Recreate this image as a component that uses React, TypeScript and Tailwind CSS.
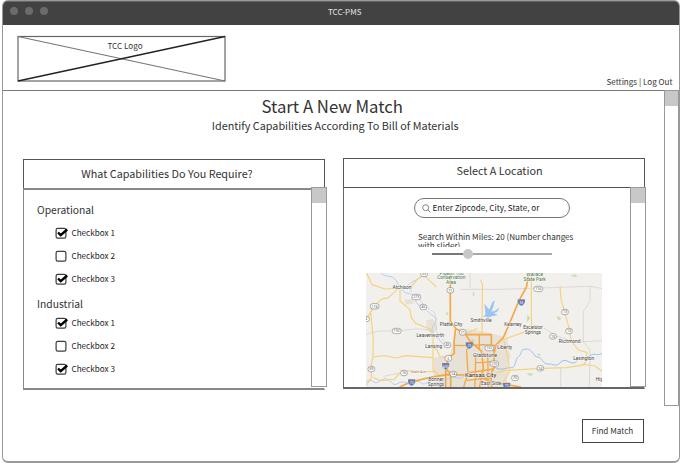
import React from "react";

function Checkbox({ label, checked }: { label: string; checked: boolean }) {
  return (
    <label className="flex h-[23.3px] items-center">
      <svg className="h-[14px] w-[15px] shrink-0" viewBox="0 0 15 14">
        <rect x="2.1" y="2.3" width="9.8" height="9.8" rx="1.7" fill="white" stroke="#3c3c3c" strokeWidth="1.2" />
        {checked && <path d="M4 6.5 6.7 9.1 13.2 3.5" fill="none" stroke="#000" strokeWidth="2.4" />}
      </svg>
      <span className="ml-[2.5px] text-[8.15px] leading-[12px] whitespace-nowrap text-[#222]">{label}</span>
    </label>
  );
}

function Group({ title, className, listClassName }: { title: string; className: string; listClassName: string }) {
  return (
    <section className={className}>
      <h3 className="h-[16px] text-[10.3px] leading-[16px] text-[#333]">{title}</h3>
      <div className={`ml-[17px] ${listClassName}`}>
        <Checkbox label="Checkbox 1" checked />
        <Checkbox label="Checkbox 2" checked={false} />
        <Checkbox label="Checkbox 3" checked />
      </div>
    </section>
  );
}

function Scrollbar({ className }: { className: string }) {
  return (
    <div className={`shrink-0 border border-[#999] bg-white ${className}`}>
      <div className="h-[15px] bg-[#c8c8c8]" />
    </div>
  );
}

function Shield({ x, y, n }: { x: number; y: number; n: string }) {
  const w = n.length > 2 ? 13 : 10;
  return (
    <g>
      <rect x={x - w} y={y - 8} width={w * 2} height="16" rx="7" fill="#fff" stroke="#888" strokeWidth="2" />
      <text x={x} y={y + 4} fontSize="11" textAnchor="middle" fill="#555">{n}</text>
    </g>
  );
}

function Interstate({ x, y, n }: { x: number; y: number; n: string }) {
  return (
    <g>
      <path d={`M${x - 11} ${y - 9}H${x + 11}Q${x + 13} ${y + 6} ${x} ${y + 11}Q${x - 13} ${y + 6} ${x - 11} ${y - 9}Z`} fill="#4f7fc4" stroke="#eee" />
      <path d={`M${x - 10} ${y - 8}h20v4h-20z`} fill="#b86572" />
      <text x={x} y={y + 5} fontSize="10" textAnchor="middle" fill="#fff">{n}</text>
    </g>
  );
}

function RegionMap() {
  return (
    <svg className="block h-[114px] w-[236px] font-['Roboto',sans-serif]" viewBox="18 15 708 342" preserveAspectRatio="none" fontSize="14.5" fill="#444">
      <rect x="18" y="15" width="711" height="342" fill="#f2f0ec" />
      <g fill="#e7e1d6">
        <path d="M222 270 270 258 282 215 298 180 368 190 428 205 446 235 440 357 220 357Z" />
        <path d="M198 157 218 152 232 175 222 198 202 188ZM130 96 158 92 162 106 140 110ZM440 200 452 270 430 300Z" />
      </g>
      <g fill="#c5ddb0">
        <path d="M338 70l7 10-6 5zM258 130l9 9-8 3zM502 140l9 10-10 13zM590 143l15 8-10 7zM631 25l14-7 7 9zM500 315l22 2-12 8zM532 255l11 5-8 4zM335 210l10 9-9 7z" />
      </g>
      <g fill="none" stroke="#cfcecb" strokeWidth="2">
        <path d="M18 200C55 184 80 190 110 189S175 175 220 190M300 64H420L690 55 729 62M330 15V60M552 180 590 205 650 222 729 218M690 55V100L670 130V222L690 245 688 357M602 300V357M70 325 120 315M170 80 190 110 225 135 230 190 260 230" />
      </g>
      <g fill="none" stroke="#b5cff5" strokeWidth="3" strokeLinecap="round">
        <path d="M62 15C80 32 96 17 109 39S128 76 149 77 160 105 180 113 202 134 222 145 212 169 216 190 233 204 240 218 261 226 270 235" />
        <path d="M172 34 155 42 145 52 154 70M18 342C35 323 40 354 58 340S85 333 97 346 118 333 140 345 166 330 182 344 206 331 226 337 239 347 262 333 291 338 310 326" />
        <path stroke="#9dbff3" d="M402 296C424 313 440 296 454 299S464 273 476 265 478 243 499 243 520 268 533 267 547 289 564 288 587 299 603 282 635 299 651 278 673 278 690 264 713 270 729 253" />
      </g>
      <path fill="#9dc3f3" stroke="#8ab6ef" d="m374 109 9 11 5 6 5-12 5-12 5-3-3 15-7 18 12-3 12-8-5 9-12 6 12 5-14 2-9 3-6 8-3-9-9 1 6-7-1-16z" />
      <g fill="none" stroke="#f6d27f" strokeWidth="3.6" strokeLinejoin="round">
        <path d="M20 15 36 50 75 63 120 60 153 57 172 34 204 15M18 156 42 115 63 94 85 89 116 61" />
        <path d="M120 60V99L150 125 154 149 167 166 210 183 219 205V306L238 322M40 115 32 133 40 216 39 265 32 302 35 329 18 352M39 267 73 263 109 270 137 263 219 269M40 329 62 338 102 334 120 315M122 308 228 312M184 15 205 34 229 57" />
        <path d="M264 269 240 267 231 245 220 240M304 205 352 181M360 35Q370 45 367 70L366 200M514 15 514 126 515 186 490 193 430 215M600 55 603 92 613 130 625 172 635 220 655 246 681 253 674 290 620 299 544 301 430 308 394 320M667 288 705 294 729 312M432 218 444 270 449 310 430 342" />
      </g>
      <g fill="none" stroke="#f5a742" strokeWidth="5" strokeLinejoin="round">
        <path d="M271 15V159L287 181 282 221 283 256 264 270 257 312 257 357M287 182 314 195 329 218 365 250 370 300 359 357M317 200H394V230L402 250M507 15 499 58 477 98 449 165 430 209 408 231 402 256 402 299 392 319 395 357M119 357 152 342 211 328 260 320 318 321 358 326 400 344 442 350 483 357M251 294 272 318 272 357" />
        <path strokeWidth="4" d="M327 230 320 247 322 285 324 315 311 357M283 232 329 233 369 230 405 232M345 262 371 257 402 267M349 284 370 283 403 280M347 265 345 357M383 257 385 357M320 315 402 303M320 337 402 328M358 200V245" />
      </g>
      <g textAnchor="middle" stroke="#f8f7f4" strokeWidth="3" paintOrder="stroke">
        <text x="126" y="63">Atchison</text>
        <g fill="#4b784d">
          <text x="275" y="20">Pigeon Too</text><text x="274" y="34">Conservation</text><text x="273" y="48">Area</text>
          <text x="524" y="24">Wallace</text><text x="524" y="38">State Park</text>
        </g>
        <text x="273" y="173" fontSize="15">Platte City</text>
        <text x="363" y="163">Smithville</text>
        <text x="211" y="206">Leavenworth</text>
        <text x="221" y="241">Lansing</text>
        <text x="375" y="267" fontSize="16">Gladstone</text>
        <text x="362" y="326" fontSize="18" fill="#222">Kansas City</text>
        <text x="393" y="350">East Side</text>
        <text x="228" y="340">Bonner</text><text x="228" y="355">Springs</text>
        <text x="175" y="315" fontSize="11" fill="#a87940">State Ave</text>
        <text x="459" y="175">Kearney</text>
        <text x="519" y="182">Excelsior</text><text x="519" y="197">Springs</text>
        <text x="629" y="224">Richmond</text>
        <text x="434" y="243">Liberty</text>
        <text x="671" y="277">Lexington</text>
        <text x="707" y="340" textAnchor="start">Hig</text>
      </g>
      <Shield x={192} y={18} n="59" /><Shield x={44} y={115} n="116" />
      <Shield x={169} y={87} n="273" /><Shield x={190} y={117} n="45" />
      <Shield x={271} y={67} n="71" /><Shield x={110} y={189} n="192" />
      <Shield x={18} y={153} n="4" /><Shield x={308} y={193} n="71" />
      <Shield x={262} y={231} n="45" /><Shield x={265} y={271} n="5" />
      <Shield x={34} y={303} n="59" /><Shield x={132} y={315} n="16" />
      <Shield x={280} y={318} n="24" /><Shield x={388} y={240} n="152" />
      <Shield x={403} y={287} n="210" /><Shield x={535} y={63} n="116" />
      <Shield x={615} y={132} n="13" /><Shield x={627} y={189} n="13" />
      <Shield x={579} y={205} n="10" /><Shield x={541} y={301} n="24" />
      <Shield x={465} y={330} n="70" />
      <Interstate x={328} y={232} n="29" /><Interstate x={257} y={294} n="435" />
      <Interstate x={155} y={343} n="70" /><Interstate x={484} y={103} n="35" />
      <Interstate x={440} y={353} n="70" />
    </svg>
  );
}

export default function App() {
  return (
    <div className="h-[463px] w-[680px] overflow-hidden bg-white pl-[2px] font-['Noto_Sans_CJK_SC','Noto_Sans',sans-serif] text-[#333]">
      <div className="flex h-[463px] w-[677.5px] flex-col overflow-hidden rounded-[6px] border border-b-2 border-[#999]">
        <header className="flex h-[24px] shrink-0 items-center border-t border-[#666] bg-[#424242]">
          <div className="-mt-[5px] flex w-[120px] gap-[7px] pl-[7px]">
            <i className="size-[8px] rounded-full bg-[#6b6b6b]" />
            <i className="size-[8px] rounded-full bg-[#6b6b6b]" />
            <i className="size-[8px] rounded-full bg-[#6b6b6b]" />
          </div>
          <h1 className="-mt-[3px] ml-[205px] text-[8px] leading-[12px] whitespace-nowrap text-[#e4e4e4]">TCC-PMS</h1>
        </header>
        <div className="flex h-[66px] shrink-0 justify-between border-b border-[#777] pt-[10px] pr-[6px] pl-[14px]">
          <div className="grid h-[47px] w-[209px]">
            <svg className="col-start-1 row-start-1" width="209" height="47" viewBox="0 0 209 47" fill="none" stroke="#666">
              <rect x="1" y="1.5" width="207" height="44.5" strokeWidth="1.2" />
              <path d="m1 1.5 207 44.5" stroke="#777" strokeWidth="1.2" />
              <path d="m1 46 207-44.5" stroke="#222" strokeWidth="1.3" />
            </svg>
            <span className="col-start-1 row-start-1 pt-[5px] pl-[7px] text-center text-[8.15px] leading-[12px]">TCC Logo</span>
          </div>
          <nav className="mt-[41px] text-[8.1px] leading-[12px] whitespace-nowrap">Settings | Log Out</nav>
        </div>
        <div className="flex min-h-0 flex-1">
          <main className="w-[661px]">
            <h2 className="ml-[-2px] h-[28px] pt-px text-center text-[16.75px] leading-[28px]">Start A New Match</h2>
            <p className="h-[40px] pl-[4px] text-center text-[10.8px] leading-[12px]">Identify Capabilities According To Bill of Materials</p>
            <div className="flex gap-[16px] pl-[20px]">
              <section className="h-[232px] w-[304px]">
                <h2 className="h-[29px] w-[302px] border border-b-0 border-[#555] pr-[14px] text-center text-[10.8px] leading-[27px]">What Capabilities Do You Require?</h2>
                <div className="flex h-[202px] w-[302px] justify-between border border-t-2 border-b-2 border-[#888] border-r-transparent">
                  <div className="pl-[13px]">
                    <Group className="pt-[12px]" listClassName="mt-[3px]" title="Operational" />
                    <Group className="pt-[5px]" listClassName="-mt-px" title="Industrial" />
                  </div>
                  <Scrollbar className="-mt-[3px] -mr-[3px] h-[200px] w-[16px]" />
                </div>
              </section>
              <section className="-mt-px h-[232px] w-[303px]">
                <h2 className="h-[30px] w-[302px] border border-[#555] pl-[11px] text-center text-[10.8px] leading-[23px]">Select A Location</h2>
                <div className="flex h-[201px] w-[302px] justify-between border border-t-0 border-b-2 border-[#666] border-r-transparent">
                  <div className="w-[260px] pl-[22px]">
                    <div className="mt-[10px] ml-[48px] flex h-[20px] w-[156px] items-center rounded-full border-[1.5px] border-[#777] pl-[7px]">
                      <svg className="h-[9px] w-[9px] shrink-0" viewBox="0 0 9 9" fill="none" stroke="#666" strokeWidth=".8">
                        <circle cx="3.7" cy="3.7" r="3" /><path d="m5.9 5.9 2.5 2.5" />
                      </svg>
                      <span className="ml-[1.5px] text-[8.15px] leading-[12px] whitespace-nowrap text-[#222]">Enter Zipcode, City, State, or</span>
                    </div>
                    <p className="mt-[14px] ml-[52px] h-[15px] w-[170px] overflow-hidden text-[8.15px] leading-[9px]">Search Within Miles: 20 (Number changes<br />with slider)</p>
                    <div className="mt-px ml-[66px] flex h-[12px] w-[120px] items-center">
                      <i className="h-[2px] w-[31px] bg-[#777]" />
                      <i className="size-[10px] rounded-full bg-[#c8c8c8]" />
                      <i className="h-[2px] flex-1 bg-[#aaa]" />
                    </div>
                    <div className="mt-[13px]"><RegionMap /></div>
                  </div>
                  <Scrollbar className="-mt-px -mr-[2px] h-[200px] w-[16px]" />
                </div>
              </section>
            </div>
            <button className="mt-[28px] ml-[579px] block h-[24px] w-[62px] border-[1.5px] border-[#444] pr-px text-[8.15px] leading-[20px] whitespace-nowrap">Find Match</button>
          </main>
          <Scrollbar className="-mt-px h-[316px] w-[15px]" />
        </div>
      </div>
    </div>
  );
}
